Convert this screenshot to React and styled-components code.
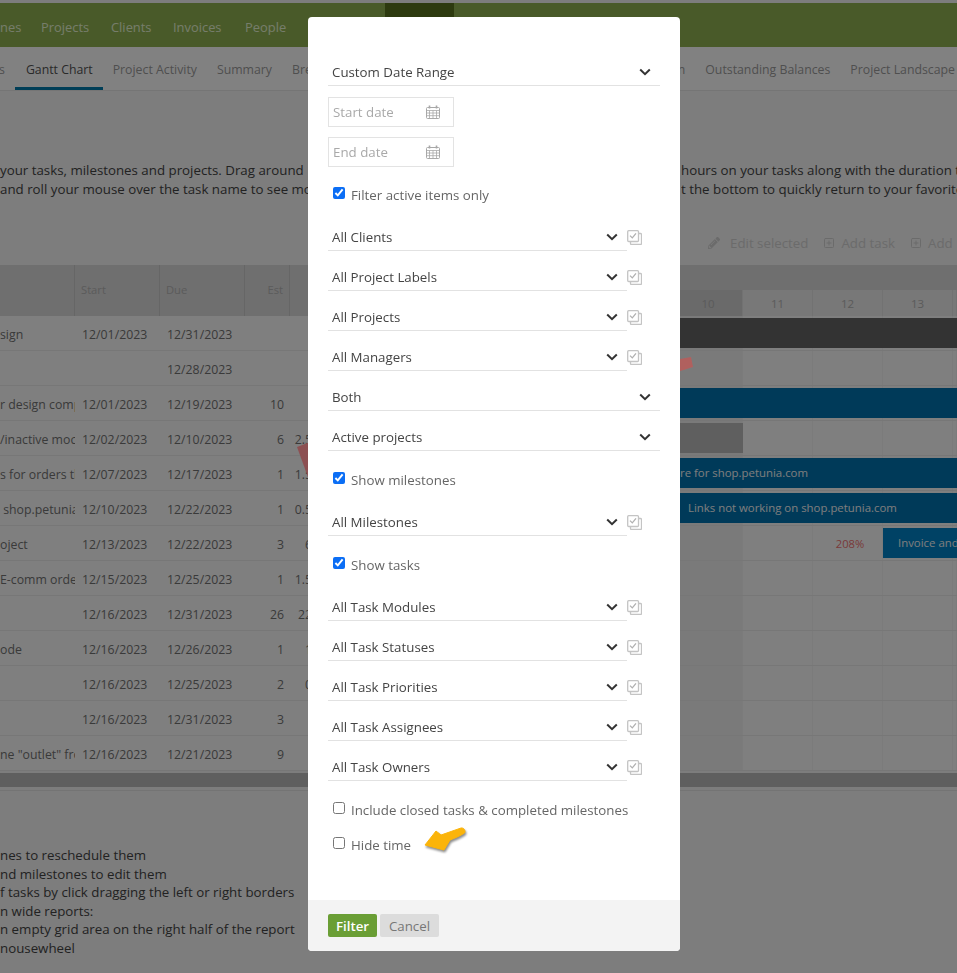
import React from 'react';
import styled, { createGlobalStyle } from 'styled-components';
import { FaPencilAlt } from 'react-icons/fa';
import { FiPlusSquare } from 'react-icons/fi';

const GlobalStyle = createGlobalStyle`
  html, body {
    margin: 0;
    padding: 0;
    background: #e3e3e3;
    font-family: "Open Sans", "Noto Sans", sans-serif;
    font-size: 13.3px;
  }
`;

// page behind the dialog
const Page = styled.div`
  width: 957px;
  height: 973px;
  overflow: hidden;
  position: relative;
  padding-top: 3px;
  box-sizing: border-box;
  background: #e3e3e3;
  color: #3e3e3e;
`;

const TopNav = styled.nav`
  height: 44px;
  display: flex;
  background: #86a54c;
  overflow: hidden;
`;

const NavItem = styled.div`
  display: flex;
  align-items: center;
  width: ${({ $w }) => $w}px;
  flex: none;
  box-sizing: border-box;
  padding-top: 3px;
  justify-content: ${({ $active }) => ($active ? 'center' : 'flex-start')};
  background: ${({ $active }) => ($active ? '#526a1d' : 'transparent')};
  color: #d8e3c4;
  font-size: 12.9px;
  white-space: nowrap;
`;

const TabBar = styled.div`
  height: 44px;
  display: flex;
  justify-content: space-between;
  background: #ececec;
  border-bottom: 1px solid #d6d6d6;
  box-sizing: border-box;
  overflow: hidden;
`;

const TabGroup = styled.div`
  display: flex;
  margin-right: ${({ $bleed }) => $bleed || 0}px;
`;

const Tab = styled.div`
  display: flex;
  align-items: center;
  box-sizing: border-box;
  padding: 4px 10px 0 ${({ $active }) => ($active ? 11 : 10)}px;
  margin-left: ${({ $pull }) => $pull || 0}px;
  height: 43px;
  font-size: 12.3px;
  color: ${({ $active }) => ($active ? '#4c4c4c' : '#909090')};
  border-bottom: 3px solid ${({ $active }) => ($active ? '#00719f' : 'transparent')};
  white-space: nowrap;
`;

const Intro = styled.div`
  margin-top: 70px;
  height: 71px;
  font-size: 13.3px;
  line-height: 18.6px;
`;

const IntroLine = styled.div`
  display: grid;
  grid-template-columns: 1fr 276px;
  white-space: nowrap;
  overflow: hidden;
  span {
    overflow: hidden;
  }
`;

const Toolbar = styled.div`
  height: 22px;
  margin: 0 0 11px 708px;
  display: flex;
  align-items: center;
  gap: 6px;
  font-size: 13.3px;
  color: #c3c3c3;
  white-space: nowrap;
  overflow: hidden;
  svg {
    flex: none;
  }
  span {
    margin-right: 9px;
  }
  svg:first-child {
    margin-right: 4px;
  }
`;

const HeadRow = styled.div`
  height: 51px;
  display: grid;
  grid-template-columns: 75px 85px 85px 45px 1fr 277px;
  background: #cacaca;
`;

const HeadCell = styled.div`
  padding: 17px 6px 0;
  color: #a6a6a6;
  font-size: 11.2px;
  border-right: 1px solid #bbb;
  text-align: ${({ $right }) => ($right ? 'right' : 'left')};
`;

const DayBand = styled.div`
  padding-top: 25px;
`;

const Days = styled.div`
  height: 26px;
  display: grid;
  grid-template-columns: 63px 70px 70px 70px 1fr;
`;

const Day = styled.div`
  display: flex;
  align-items: center;
  justify-content: center;
  font-size: 11.5px;
  color: #a6a6a6;
  padding-right: ${({ $today }) => ($today ? 6 : 0)}px;
  background: ${({ $today }) => ($today ? '#c1c1c1' : '#dadada')};
  border-right: 1px solid #cfcfcf;
`;

const Row = styled.div`
  height: 35px;
  display: grid;
  grid-template-columns: 75px 85px 85px 45px 1fr 277px;
  align-items: center;
  background: #e7e7e7;
  border-bottom: 1px solid #d9d9d9;
  box-sizing: border-box;
  font-size: 12.3px;
  color: #6a6a6a;
  white-space: nowrap;
`;

const Cell = styled.div`
  overflow: hidden;
  padding-top: 2px;
  padding-left: ${({ $pad }) => $pad ?? 7}px;
  padding-right: ${({ $right }) => ($right ? 6 : 0)}px;
  text-align: ${({ $right }) => ($right ? 'right' : 'left')};
`;

const Spent = styled.div`
  width: 22px;
  padding-top: 2px;
  text-align: right;
`;

const Timeline = styled.div`
  height: 100%;
  display: grid;
  grid-template-columns: 63px 70px 70px 70px 1fr;
  grid-template-rows: 1fr;
`;

const Slot = styled.div`
  grid-row: 1;
  grid-column: ${({ $col }) => $col};
  background: ${({ $today }) => ($today ? '#dedede' : 'transparent')};
  border-right: 1px solid #e0e0e0;
`;

const Percent = styled.div`
  grid-row: 1;
  grid-column: 3;
  align-self: center;
  text-align: center;
  padding-left: 4px;
  font-size: 11.2px;
  color: #de6a6a;
`;

const Bar = styled.div`
  grid-row: 1;
  grid-column: ${({ $from }) => $from} / -1;
  margin: 2px 0 2px;
  padding: 0 0 1px ${({ $pad }) => $pad || 0}px;
  display: flex;
  align-items: center;
  overflow: hidden;
  font-size: 11.4px;
  background: ${({ $color }) => $color};
  color: #e4e4e4;
  ${({ $to }) => $to && `grid-column-end: ${$to};`}
`;

const Scrollbar = styled.div`
  height: 14px;
  margin-top: 2px;
  background: #adadad;
`;

const Rule = styled.div`
  height: 1px;
  margin-top: 3px;
  background: #d3d3d3;
`;

const Help = styled.div`
  margin-top: 55px;
  font-size: 13.3px;
  line-height: 18.6px;
  white-space: nowrap;
`;

// dialog
const Overlay = styled.div`
  position: fixed;
  inset: 0;
  background: rgba(0, 0, 0, 0.45);
`;

const Annotation = styled.svg`
  position: absolute;
  left: 0;
  top: 0;
`;

const Modal = styled.div`
  position: relative;
  width: 372px;
  margin: 17px 0 0 308px;
  background: #fff;
  border-radius: 4px;
  overflow: hidden;
  color: #555;
`;

const Body = styled.div`
  height: 883px;
  padding: 42px 20px 0;
  box-sizing: border-box;
  display: flex;
  flex-direction: column;
  position: relative;
`;

const Line = styled.div`
  display: flex;
  align-items: center;
  margin-top: ${({ $top }) => $top}px;
`;

const Select = styled.div`
  flex: 1;
  height: 27px;
  box-sizing: border-box;
  display: flex;
  align-items: center;
  justify-content: space-between;
  padding: 0 9px 1px 4px;
  border-bottom: 1px solid #e2e2e2;
  color: #444;
  font-size: 13.3px;
`;

const Side = styled.div`
  width: 33px;
  flex: none;
  display: flex;
  justify-content: flex-end;
  padding-right: 18px;
  box-sizing: border-box;
`;

const DateBox = styled.div`
  width: 126px;
  height: 30px;
  margin-top: ${({ $top }) => $top}px;
  box-sizing: border-box;
  border: 1px solid #e3e3e3;
  display: flex;
  align-items: center;
  justify-content: space-between;
  padding: 0 13px 0 4px;
  color: #a9a9a9;
`;

const CheckRow = styled.label`
  height: 20px;
  margin-top: ${({ $top }) => $top}px;
  padding-left: 5px;
  display: flex;
  align-items: center;
  gap: 6px;
  color: #666;
  input {
    width: 12px;
    height: 12px;
    margin: 0 0 4px;
    accent-color: #0b6ef5;
  }
`;

const Pointer = styled.svg`
  position: absolute;
  left: 114px;
  top: 807px;
  filter: drop-shadow(1px 2px 1px rgba(0, 0, 0, 0.45));
`;

const Footer = styled.div`
  height: 51px;
  box-sizing: border-box;
  padding: 14px 20px 0;
  display: flex;
  gap: 3px;
  align-items: flex-start;
  background: #f3f3f3;
`;

const Button = styled.button`
  height: 23px;
  border: none;
  border-radius: 2px;
  padding: 0;
  width: ${({ $w }) => $w}px;
  font-family: inherit;
  font-size: 13.3px;
  background: ${({ $primary }) => ($primary ? '#6a9e35' : '#dcdcdc')};
  color: ${({ $primary }) => ($primary ? '#fff' : '#777')};
  font-weight: ${({ $primary }) => ($primary ? 600 : 400)};
`;

const Chevron = () => (
  <svg width="12" height="8" viewBox="0 0 12 8" fill="none">
    <path d="M1.2 1.5 6 6.2l4.8-4.7" stroke="#333" strokeWidth="2" />
  </svg>
);

const Calendar = () => (
  <svg width="14" height="14" viewBox="0 0 14 14" fill="none" stroke="#a8a8a8" strokeWidth="1">
    <rect x="0.5" y="2.5" width="13" height="11" rx="1" />
    <path d="M0.5 5.5h13M0.5 8h13M0.5 10.7h13M3.5 5.5v8M7 5.5v8M10.5 5.5v8" strokeWidth="0.8" />
    <path d="M3.5 0.5v3M10.5 0.5v3" strokeWidth="1.6" />
  </svg>
);

const StackCheck = () => (
  <svg width="15" height="15" viewBox="0 0 15 15" fill="none" stroke="#c4c4c4">
    <path d="M3.5 11.6v1.9a1 1 0 0 0 1 1h9a1 1 0 0 0 1-1v-9a1 1 0 0 0-1-1h-2" strokeWidth="1.3" />
    <rect x="0.7" y="0.7" width="10.8" height="10.8" rx="1" strokeWidth="1.3" />
    <path d="M3 5.6 5.3 7.9 9 3.4" stroke="#b0b0b0" strokeWidth="1.3" />
  </svg>
);

const FilterSelect = ({ label, top, wide }) => (
  <Line $top={top}>
    <Select>
      {label}
      <Chevron />
    </Select>
    {!wide && (
      <Side>
        <StackCheck />
      </Side>
    )}
  </Line>
);

const Check = ({ label, top, checked }) => (
  <CheckRow $top={top}>
    <input type="checkbox" defaultChecked={checked} />
    {label}
  </CheckRow>
);

const rows = [
  { name: 'sign', start: '12/01/2023', due: '12/31/2023', bar: { from: 1, color: '#5d5d5d' } },
  { name: '', start: '', due: '12/28/2023' },
  { name: 'r design comp', start: '12/01/2023', due: '12/19/2023', est: '10', bar: { from: 1, color: '#006aa3' } },
  { name: '/inactive moc', start: '12/02/2023', due: '12/10/2023', est: '6', spent: '2.5', bar: { from: 1, to: 2, color: '#aeaeae' } },
  { name: 's for orders th', start: '12/07/2023', due: '12/17/2023', est: '1', spent: '1.5', bar: { from: 1, color: '#006aa3', text: 're for shop.petunia.com' } },
  { name: '\u00a0shop.petunia', start: '12/10/2023', due: '12/22/2023', est: '1', spent: '0.5', bar: { from: 1, color: '#006aa3', pad: 8, text: 'Links not working on shop.petunia.com' } },
  { name: 'oject', start: '12/13/2023', due: '12/22/2023', est: '3', spent: '6', percent: '208%', bar: { from: 4, color: '#0079b8', pad: 15, text: 'Invoice and' } },
  { name: 'E-comm orde', start: '12/15/2023', due: '12/25/2023', est: '1', spent: '1.5' },
  { name: '', start: '12/16/2023', due: '12/31/2023', est: '26', spent: '22' },
  { name: 'ode', start: '12/16/2023', due: '12/26/2023', est: '1', spent: '1' },
  { name: '', start: '12/16/2023', due: '12/25/2023', est: '2', spent: '0' },
  { name: '', start: '12/16/2023', due: '12/31/2023', est: '3' },
  { name: 'ne "outlet" fro', start: '12/16/2023', due: '12/21/2023', est: '9' },
];

const App = () => {
  return (
    <>
      <GlobalStyle />
      <Page>
        <TopNav>
          <NavItem $w={41}>nes</NavItem>
          <NavItem $w={70}>Projects</NavItem>
          <NavItem $w={62}>Clients</NavItem>
          <NavItem $w={72}>Invoices</NavItem>
          <NavItem $w={140}>People</NavItem>
          <NavItem $w={69} $active>Reports</NavItem>
        </TopNav>
        <TabBar>
          <TabGroup>
            <Tab $pull={-11}>s</Tab>
            <Tab $active>Gantt Chart</Tab>
            <Tab>Project Activity</Tab>
            <Tab>Summary</Tab>
            <Tab>Breakdown</Tab>
          </TabGroup>
          <TabGroup $bleed={-8}>
            <Tab>Time Allocation</Tab>
            <Tab>Outstanding Balances</Tab>
            <Tab>Project Landscape</Tab>
          </TabGroup>
        </TabBar>
        <Intro>
          <IntroLine>
            <span> your tasks, milestones and projects. Drag around</span>
            <span>hours on your tasks along with the duration t</span>
          </IntroLine>
          <IntroLine>
            <span> and roll your mouse over the task name to see mo</span>
            <span>t the bottom to quickly return to your favorite</span>
          </IntroLine>
        </Intro>
        <Toolbar>
          <FaPencilAlt size={12} />
          <span>Edit selected</span>
          <FiPlusSquare size={12} />
          <span>Add task</span>
          <FiPlusSquare size={12} />
          <span>Add</span>
        </Toolbar>
        <HeadRow>
          <HeadCell />
          <HeadCell>Start</HeadCell>
          <HeadCell>Due</HeadCell>
          <HeadCell $right>Est</HeadCell>
          <div />
          <DayBand>
            <Days>
              <Day $today>10</Day>
              <Day>11</Day>
              <Day>12</Day>
              <Day>13</Day>
              <Day />
            </Days>
          </DayBand>
        </HeadRow>
        {rows.map((row, i) => (
          <Row key={i}>
            <Cell $pad={0}>{row.name}</Cell>
            <Cell>{row.start}</Cell>
            <Cell>{row.due}</Cell>
            <Cell $right>{row.est}</Cell>
            <Spent>{row.spent}</Spent>
            <Timeline>
              <Slot $col={1} $today />
              <Slot $col={2} />
              <Slot $col={3} />
              <Slot $col={4} />
              <Slot $col={5} />
              {row.percent && <Percent>{row.percent}</Percent>}
              {row.bar && (
                <Bar $from={row.bar.from} $to={row.bar.to} $color={row.bar.color} $pad={row.bar.pad}>
                  {row.bar.text}
                </Bar>
              )}
            </Timeline>
          </Row>
        ))}
        <Scrollbar />
        <Rule />
        <Help>
          <div>nes to reschedule them</div>
          <div>nd milestones to edit them</div>
          <div>f tasks by click dragging the left or right borders</div>
          <div>n wide reports:</div>
          <div>n empty grid area on the right half of the report</div>
          <div>nousewheel</div>
        </Help>
      </Page>
      <Overlay>
        <Annotation width="957" height="973" viewBox="0 0 957 973">
          <path d="M297 447 L420 400 L320 510Z" fill="#8c5052" />
          <path d="M400 410 L691 357 L693 367 L400 460Z" fill="#b0605e" />
        </Annotation>
        <Modal>
          <Body>
            <FilterSelect label="Custom Date Range" top={0} wide />
            <DateBox $top={11}>
              Start date
              <Calendar />
            </DateBox>
            <DateBox $top={10}>
              End date
              <Calendar />
            </DateBox>
            <Check label="Filter active items only" top={18} checked />
            <FilterSelect label="All Clients" top={19} />
            <FilterSelect label="All Project Labels" top={13} />
            <FilterSelect label="All Projects" top={13} />
            <FilterSelect label="All Managers" top={13} />
            <FilterSelect label="Both" top={13} wide />
            <FilterSelect label="Active projects" top={13} wide />
            <Check label="Show milestones" top={19} checked />
            <FilterSelect label="All Milestones" top={19} />
            <Check label="Show tasks" top={19} checked />
            <FilterSelect label="All Task Modules" top={19} />
            <FilterSelect label="All Task Statuses" top={13} />
            <FilterSelect label="All Task Priorities" top={13} />
            <FilterSelect label="All Task Assignees" top={13} />
            <FilterSelect label="All Task Owners" top={13} />
            <Check label="Include closed tasks & completed milestones" top={19} />
            <Check label="Hide time" top={15} />
            <Pointer width="46" height="30" viewBox="0 0 46 30">
              <path
                d="M3 21 L14 7 L19 11 L39 4 C42 3.5 44 7 42.5 9 C38 12 33 14 28 16 L22 26 Z"
                fill="#fbb40a"
                stroke="#fbb40a"
                strokeLinejoin="round"
              />
            </Pointer>
          </Body>
          <Footer>
            <Button $primary $w={49}>Filter</Button>
            <Button $w={59}>Cancel</Button>
          </Footer>
        </Modal>
      </Overlay>
    </>
  );
};

export default App;
